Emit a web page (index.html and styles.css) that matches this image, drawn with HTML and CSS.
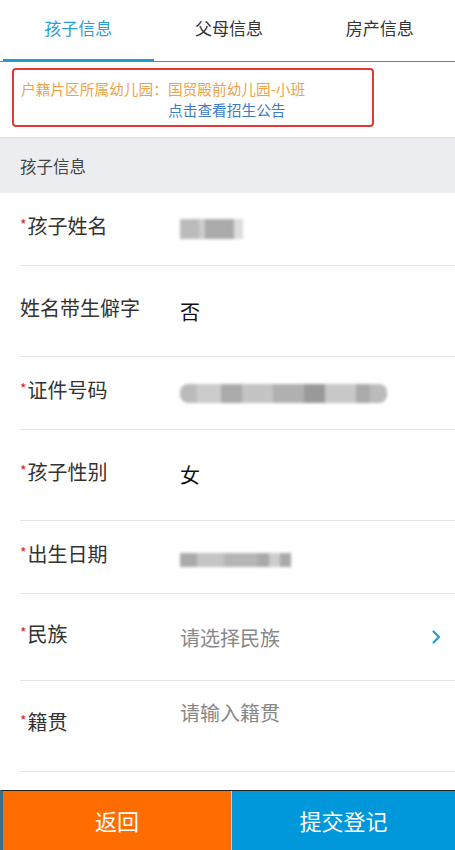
FILE: index.html
```html
<!DOCTYPE html>
<html lang="zh-CN">
<head>
<meta charset="utf-8">
<title>孩子信息</title>
<link rel="stylesheet" href="styles.css">
</head>
<body>
<div class="page">
  <nav class="tabs">
    <div class="tab tab--active">孩子信息</div>
    <div class="tab">父母信息</div>
    <div class="tab">房产信息</div>
  </nav>

  <div class="notice-wrap">
    <div class="notice">
      <div class="notice-line">户籍片区所属幼儿园：国贸殿前幼儿园-小班</div>
      <div class="notice-link">点击查看招生公告</div>
    </div>
  </div>

  <div class="section-title">孩子信息</div>

  <div class="form">
    <div class="row row--short">
      <div class="label"><span class="req">*</span>孩子姓名</div>
      <div class="value"><span class="blur blur--name"></span></div>
    </div>
    <div class="row row--tall">
      <div class="label">姓名带生僻字</div>
      <div class="value value--low">否</div>
    </div>
    <div class="row row--short">
      <div class="label"><span class="req">*</span>证件号码</div>
      <div class="value"><span class="blur blur--id"></span></div>
    </div>
    <div class="row row--tall">
      <div class="label"><span class="req">*</span>孩子性别</div>
      <div class="value">女</div>
    </div>
    <div class="row row--short">
      <div class="label"><span class="req">*</span>出生日期</div>
      <div class="value"><span class="blur blur--date"></span></div>
    </div>
    <div class="row row--mid">
      <div class="label"><span class="req">*</span>民族</div>
      <div class="value value--low placeholder">请选择民族</div>
      <svg class="chevron" width="12" height="16" viewBox="0 0 12 16"><path d="M3.5 2.5 L9 8 L3.5 13.5" fill="none" stroke="#2a9cc0" stroke-width="2.2" stroke-linecap="round" stroke-linejoin="round"/></svg>
    </div>
    <div class="row row--tall row--textarea">
      <div class="label"><span class="req">*</span>籍贯</div>
      <div class="value value--top placeholder">请输入籍贯</div>
    </div>
  </div>
</div>

<div class="actions">
  <div class="btn btn--back">返回</div>
  <div class="btn btn--submit">提交登记</div>
</div>
</body>
</html>
```

FILE: styles.css
```css
* { box-sizing: border-box; }
html, body { margin: 0; padding: 0; background: #fff; }
body {
  font-family: "Noto Sans CJK SC", "Noto Sans", "Liberation Sans", sans-serif;
  color: #333;
}
.page { padding-bottom: 80px; }

.tabs {
  display: flex;
  height: 62px;
  border-bottom: 1px solid #1f9bcf;
}
.tab {
  flex: 1;
  text-align: center;
  font-size: 17px;
  line-height: 20px;
  padding-top: 18px;
  color: #333;
}
.tab--active {
  color: #2b9ed2;
  border-bottom: 3px solid #1f9bcf;
  margin-left: 3px;
  margin-bottom: -1px;
}

.notice-wrap {
  padding: 6px 81px 10px 12px;
  border-bottom: 1px solid #dddddd;
}
.notice {
  border: 2px solid #e53535;
  border-radius: 4px;
  height: 59px;
  padding: 8px 0 0 7px;
  font-size: 14.7px;
  line-height: 21px;
}
.notice-line { color: #eea34a; }
.notice-link { color: #3a7cc8; padding-left: 147px; }

.section-title {
  background: #ebedf0;
  height: 55px;
  padding: 17px 0 0 20px;
  font-size: 16.5px;
  line-height: 22px;
  color: #444;
}

.row {
  display: flex;
  align-items: center;
  margin-left: 20px;
  border-bottom: 1px solid #e5e5e5;
  position: relative;
}
.row--short { height: 73px; }
.row--tall { height: 91px; }
.row--mid { height: 87px; }

.label {
  width: 160px;
  font-size: 20px;
  line-height: 26px;
  color: #333;
  flex-shrink: 0;
  padding-bottom: 7px;
}
.req { color: #e02020; font-size: 14px; line-height: 0; vertical-align: 4px; margin-right: 1px; }
.value {
  font-size: 20px;
  line-height: 26px;
  color: #111;
  flex: 1;
}
.value--low { padding-top: 2px; }
.placeholder { color: #888; }
.row--textarea { align-items: flex-start; }
.row--textarea .label { padding-top: 28px; padding-bottom: 0; }
.value--top { padding-top: 19px; }

.blur {
  display: inline-block;
  vertical-align: middle;
  filter: blur(1.5px);
}
.blur--name {
  width: 63px; height: 20px;
  background: linear-gradient(90deg, #bbb 0 30%, #ccc 30% 40%, #aaa 40% 85%, #ddd 85%);
  margin-bottom: 4px;
}
.blur--id {
  width: 207px; height: 19px;
  border-radius: 8px;
  background: linear-gradient(90deg, #bbb 0 8%, #ccc 8% 20%, #aaa 20% 30%, #c4c4c4 30% 45%, #b0b0b0 45% 60%, #999 60% 70%, #c8c8c8 70% 85%, #aaa 85% 92%, #bbb 92%);
  margin-bottom: 4px;
}
.blur--date {
  width: 111px; height: 14px;
  background: linear-gradient(90deg, #aaa 0 15%, #c4c4c4 15% 40%, #b5b5b5 40% 70%, #aaa 70% 80%, #ccc 80% 90%, #aaa 90%);
}
.chevron {
  position: absolute;
  right: 13px;
  top: 35px;
}

.actions {
  position: fixed;
  left: 0; right: 0; bottom: 0;
  height: 60px;
  display: flex;
  border-top: 1px solid #222;
  border-left: 3px solid #3a6f8a;
}
.btn {
  display: flex;
  align-items: center;
  justify-content: center;
  color: #fff;
  font-size: 22px;
  padding-bottom: 2px;
}
.btn--back { width: 228px; background: #ff6d00; }
.btn--submit { flex: 1; background: #0098da; border-left: 1px solid #f3c9a0; }
```
